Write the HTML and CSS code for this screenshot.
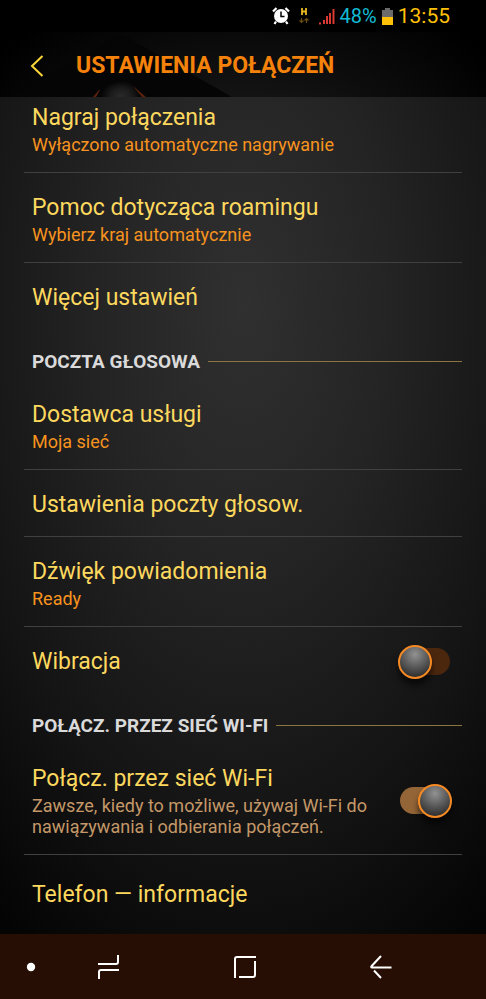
FILE: index.html
```html
<!DOCTYPE html>
<html lang="pl">
<head>
<meta charset="utf-8">
<meta name="viewport" content="width=device-width, initial-scale=1">
<title>Ustawienia połączeń</title>
<link rel="stylesheet" href="styles.css">
</head>
<body>
<div class="status">
  <svg class="alarm" width="18" height="18" viewBox="0 0 18 18" aria-hidden="true">
    <circle cx="9" cy="9" r="7" fill="#fff"/>
    <path d="M1 4.500 4.500 1M17 4.500 13.500 1M4 14.500 2.500 17M14 14.500l1.500 2.500" stroke="#fff" stroke-width="2.200" fill="none"/>
    <path d="M9 4.500V9.500H12.500" stroke="#000" stroke-width="1.500" fill="none"/>
  </svg>
  <svg class="data" width="10" height="18" viewBox="0 0 10 18" aria-hidden="true">
    <path d="M3 1v7M7 1v7M3 4.500h4" stroke="#e8b820" stroke-width="1.800" fill="none"/>
    <path d="M2.500 11v4M.5 13.500l2 2 2-2M7.500 16v-4M5.500 13.500l2-2 2 2" stroke="#6b4d10" stroke-width="1.200" fill="none"/>
  </svg>
  <svg class="signal" width="17" height="17" viewBox="0 0 17 17" aria-hidden="true">
    <path d="M1 15.500h2M6 16v-4M9 16V8M12 16V5M15.500 16V1" stroke="#e23b34" stroke-width="1.900" fill="none"/>
  </svg>
  <span class="percent">48%</span>
  <svg class="battery" width="11" height="17" viewBox="0 0 11 17" aria-hidden="true">
    <path d="M3 0h5v2h3v7H0V2h3z" fill="#6b6b6b"/>
    <path d="M0 9h11v8H0z" fill="#ffc107"/>
  </svg>
  <span class="time">13:55</span>
</div>
<header class="bar">
  <svg class="peak" width="222" height="65" viewBox="0 0 222 65" aria-hidden="true">
    <defs>
      <radialGradient id="glow"><stop offset="0" stop-color="#2a2a2a"/><stop offset=".5" stop-color="#1c1c1c"/><stop offset="1" stop-color="#050505"/></radialGradient>
    </defs>
    <path d="M0 65 104 6q7-4 14 0L222 65z" fill="#050505"/>
    <ellipse cx="111" cy="64" rx="20" ry="15" fill="url(#glow)"/>
    <path d="M83 65 89 58 90 58 86 65zM123 54 136 65 132 65z" fill="#5a210c"/>
  </svg>
  <button class="back" type="button" aria-label="Wstecz">
    <svg width="14" height="22" viewBox="0 0 14 22" aria-hidden="true"><path d="M12.500 1 2 11 12.500 21" fill="none" stroke="#fcd638" stroke-width="2"/></svg>
  </button>
  <h1>USTAWIENIA POŁĄCZEŃ</h1>
</header>
<main>
  <div class="list">
    <a class="row" href="#nagraj"><span class="title">Nagraj połączenia</span><span class="sub">Wyłączono automatyczne nagrywanie</span></a>
    <a class="row" href="#roaming"><span class="title">Pomoc dotycząca roamingu</span><span class="sub">Wybierz kraj automatycznie</span></a>
    <a class="row last" href="#wiecej"><span class="title">Więcej ustawień</span></a>
    <h2>POCZTA GŁOSOWA</h2>
    <a class="row" href="#dostawca"><span class="title">Dostawca usługi</span><span class="sub">Moja sieć</span></a>
    <a class="row" href="#poczta"><span class="title">Ustawienia poczty głosow.</span></a>
    <a class="row" href="#dzwiek"><span class="title">Dźwięk powiadomienia</span><span class="sub">Ready</span></a>
    <div class="row switch-row last">
      <label class="text" for="vibration"><span class="title">Wibracja</span></label>
      <input class="switch" type="checkbox" role="switch" id="vibration">
    </div>
    <h2>POŁĄCZ. PRZEZ SIEĆ WI-FI</h2>
    <div class="row switch-row">
      <label class="text" for="wifi"><span class="title">Połącz. przez sieć Wi-Fi</span><span class="sub muted">Zawsze, kiedy to możliwe, używaj Wi-Fi do nawiązywania i odbierania połączeń.</span></label>
      <input class="switch" type="checkbox" role="switch" id="wifi" checked>
    </div>
    <a class="row about last" href="#telefon"><span class="title">Telefon — informacje</span></a>
  </div>
</main>
<nav>
  <button class="dot" type="button" aria-label="Ukryj pasek"><svg width="10" height="10" viewBox="0 0 10 10"><circle cx="5" cy="5" r="4.200" fill="#fff"/></svg></button>
  <button type="button" aria-label="Ostatnie"><svg width="22" height="24" viewBox="0 0 22 24"><path d="M20 0v7q0 2-2 2H0M1 24v-7q0-2 2-2H21" fill="none" stroke="#fff" stroke-width="2"/></svg></button>
  <button type="button" aria-label="Ekran główny"><svg width="24" height="24" viewBox="0 0 24 24"><path d="M2 23V4q0-2 2-2H23M22 6v14q0 2-2 2H6" fill="none" stroke="#fff" stroke-width="2"/></svg></button>
  <button type="button" aria-label="Wstecz"><svg width="22" height="24" viewBox="0 0 22 24"><path d="M11 1 1.500 11.200q-.8 1.300.5 1.300H21.500M4 15.500 11 23" fill="none" stroke="#fff" stroke-width="2"/></svg></button>
</nav>
</body>
</html>
```
FILE: styles.css
```css
*, *::before, *::after { box-sizing: border-box; }

body {
  margin: 0;
  min-height: 100vh;
  display: flex;
  flex-direction: column;
  background: #000;
  font-family: Roboto, sans-serif;
}

button {
  display: flex;
  align-items: center;
  justify-content: center;
  padding: 0;
  border: 0;
  background: none;
}

svg { display: block; }

.status {
  height: 32px;
  padding: 0 36px;
  display: flex;
  align-items: center;
  justify-content: flex-end;
  gap: 5px;
  font-size: 20px;
  line-height: 32px;
}
.alarm, .data { margin-right: 4px; }
.percent { color: #12bcd4; }
.time {
  font-size: 21px;
  color: #ffc107;
}

.bar {
  position: relative;
  height: 65px;
  display: flex;
  align-items: center;
  padding: 2px 24px 0;
  gap: 26px;
  background: radial-gradient(ellipse 60% 300% at 50% 200%, #1d1d1d, #000);
}
.peak {
  position: absolute;
  left: 10px;
  bottom: 0;
}
.back {
  position: relative;
  width: 26px;
  height: 48px;
}
h1 {
  position: relative;
  margin: 0;
  font-size: 23px;
  line-height: 28px;
  font-weight: 700;
  color: #f5820b;
}

main {
  flex: 1;
  overflow: hidden;
  background: radial-gradient(ellipse 85% 90% at 50% 25%, #303030 0%, #242424 35%, #141414 70%, #040404 100%);
}

/* The list is scrolled slightly under the title bar. */
.list {
  margin: -14px 24px 0;
}

.row {
  display: flex;
  flex-direction: column;
  gap: 2px;
  padding: 21px 8px 17px;
  border-bottom: 1px solid #404040;
  text-decoration: none;
}
.last { border-bottom-color: transparent; }
.about { padding-top: 26px; }

.title {
  font-size: 23px;
  line-height: 28px;
  color: #fdd85e;
}
.sub {
  font-size: 18px;
  line-height: 21px;
  color: #f7931e;
}
.muted { color: #c49868; }

.switch-row {
  flex-direction: row;
  align-items: center;
  gap: 24px;
}
.text {
  flex: 1;
  display: flex;
  flex-direction: column;
  gap: 2px;
}

h2 {
  margin: 0;
  height: 50px;
  padding: 14px 0 0 8px;
  display: flex;
  align-items: flex-start;
  gap: 8px;
  font-size: 19px;
  line-height: 36px;
  font-weight: 700;
  color: #dadada;
}
h2::after {
  content: "";
  flex: 1;
  height: 1px;
  margin-top: 17px;
  background: #8c7640;
}

.switch {
  appearance: none;
  position: relative;
  flex: none;
  width: 54px;
  height: 34px;
  margin: -4px 2px -4px 0;
}
.switch::before {
  content: "";
  position: absolute;
  inset: 3px 2px 4px;
  border-radius: 14px;
  background: #4b270e;
}
.switch::after {
  content: "";
  position: absolute;
  top: 0;
  left: 0;
  width: 34px;
  height: 34px;
  border: 2px solid #f58a24;
  border-radius: 50%;
  background: radial-gradient(circle at 50% 28%, #929292, #5c5c5c 40%, #151515 95%);
  background-origin: border-box;
  box-shadow: 0 6px 6px #0009;
}
.switch:checked::before { background: #946537; }
.switch:checked::after {
  left: auto;
  right: 0;
}

nav {
  height: 65px;
  padding-top: 1px;
  display: grid;
  grid-template-columns: 41px 136px 136px 136px 1fr;
  background: #270e05;
}
.dot { padding-left: 20px; }
```
